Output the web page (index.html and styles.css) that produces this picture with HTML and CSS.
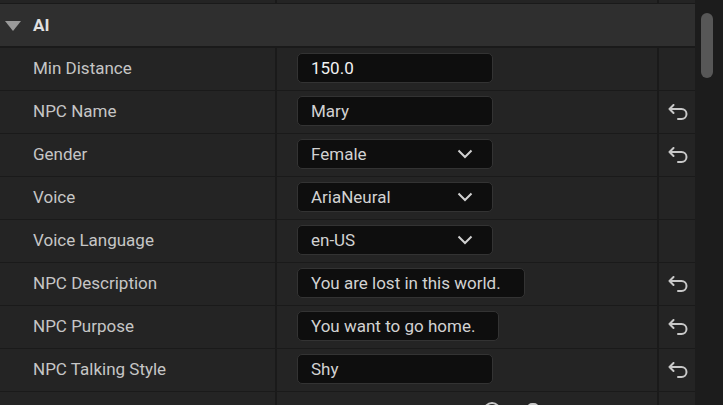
FILE: index.html
```html
<!DOCTYPE html>
<html>
<head>
<meta charset="utf-8">
<link rel="stylesheet" href="styles.css">
</head>
<body>
<div class="panel">
  <div class="list">
    <div class="row strip"><div class="cell"></div><div class="cell"></div><div class="cell"></div></div>
    <div class="header">
      <svg class="tri" width="16" height="10" viewBox="0 0 16 10"><path d="M0 0 H16 L8 10 Z" fill="#9a9a9a"/></svg>
      <span class="htitle">AI</span>
    </div>
    <div class="rows">
      <div class="row">
        <div class="cell name">Min Distance</div>
        <div class="cell val"><div class="box w196 bright">150.0</div></div>
        <div class="cell"></div>
      </div>
      <div class="row">
        <div class="cell name">NPC Name</div>
        <div class="cell val"><div class="box w196">Mary</div></div>
        <div class="cell reset"><svg width="20" height="17" viewBox="0 0 20 17"><path d="M1.5 5 H13.5 A5 5 0 0 1 13.5 15 H10 M5.5 1 L1.5 5 L5.5 9" fill="none" stroke="#c8c8c8" stroke-width="2" stroke-linecap="round" stroke-linejoin="round"/></svg></div>
      </div>
      <div class="row">
        <div class="cell name">Gender</div>
        <div class="cell val"><div class="box w196 select"><span>Female</span><svg width="16" height="10" viewBox="0 0 16 10"><path d="M1.5 1.5 L8 8 L14.5 1.5" fill="none" stroke="#d0d0d0" stroke-width="2"/></svg></div></div>
        <div class="cell reset"><svg width="20" height="17" viewBox="0 0 20 17"><path d="M1.5 5 H13.5 A5 5 0 0 1 13.5 15 H10 M5.5 1 L1.5 5 L5.5 9" fill="none" stroke="#c8c8c8" stroke-width="2" stroke-linecap="round" stroke-linejoin="round"/></svg></div>
      </div>
      <div class="row">
        <div class="cell name">Voice</div>
        <div class="cell val"><div class="box w196 select"><span>AriaNeural</span><svg width="16" height="10" viewBox="0 0 16 10"><path d="M1.5 1.5 L8 8 L14.5 1.5" fill="none" stroke="#d0d0d0" stroke-width="2"/></svg></div></div>
        <div class="cell"></div>
      </div>
      <div class="row">
        <div class="cell name">Voice Language</div>
        <div class="cell val"><div class="box w196 select"><span>en-US</span><svg width="16" height="10" viewBox="0 0 16 10"><path d="M1.5 1.5 L8 8 L14.5 1.5" fill="none" stroke="#d0d0d0" stroke-width="2"/></svg></div></div>
        <div class="cell"></div>
      </div>
      <div class="row">
        <div class="cell name">NPC Description</div>
        <div class="cell val"><div class="box w228">You are lost in this world.</div></div>
        <div class="cell reset"><svg width="20" height="17" viewBox="0 0 20 17"><path d="M1.5 5 H13.5 A5 5 0 0 1 13.5 15 H10 M5.5 1 L1.5 5 L5.5 9" fill="none" stroke="#c8c8c8" stroke-width="2" stroke-linecap="round" stroke-linejoin="round"/></svg></div>
      </div>
      <div class="row">
        <div class="cell name">NPC Purpose</div>
        <div class="cell val"><div class="box w202">You want to go home.</div></div>
        <div class="cell reset"><svg width="20" height="17" viewBox="0 0 20 17"><path d="M1.5 5 H13.5 A5 5 0 0 1 13.5 15 H10 M5.5 1 L1.5 5 L5.5 9" fill="none" stroke="#c8c8c8" stroke-width="2" stroke-linecap="round" stroke-linejoin="round"/></svg></div>
      </div>
      <div class="row">
        <div class="cell name">NPC Talking Style</div>
        <div class="cell val"><div class="box w196">Shy</div></div>
        <div class="cell reset"><svg width="20" height="17" viewBox="0 0 20 17"><path d="M1.5 5 H13.5 A5 5 0 0 1 13.5 15 H10 M5.5 1 L1.5 5 L5.5 9" fill="none" stroke="#c8c8c8" stroke-width="2" stroke-linecap="round" stroke-linejoin="round"/></svg></div>
      </div>
      <div class="row last">
        <div class="cell name top">Behavior Tree</div>
        <div class="cell val top">
          <span class="faint">Selected</span>
          <svg class="ico1" width="20" height="20" viewBox="0 0 20 20"><circle cx="10" cy="10" r="8" fill="none" stroke="#c8c8c8" stroke-width="2"/></svg>
          <svg class="ico2" width="16" height="20" viewBox="0 0 16 20"><rect x="2" y="2" width="12" height="16" rx="5" fill="#c8c8c8"/></svg>
        </div>
        <div class="cell"></div>
      </div>
    </div>
  </div>
  <div class="scrollbar"><div class="thumb"></div></div>
</div>
</body>
</html>
```

FILE: styles.css
```css
html, body {
  margin: 0;
  padding: 0;
  background: #1a1a1a;
  font-family: Roboto, "Liberation Sans", sans-serif;
  overflow: hidden;
}
.panel {
  display: flex;
  width: 723px;
  height: 405px;
  overflow: hidden;
}
.list {
  width: 695px;
  display: flex;
  flex-direction: column;
}
.row {
  display: grid;
  grid-template-columns: 275px 380px 36px;
  column-gap: 2px;
  height: 42px;
  margin-top: 1px;
  flex-shrink: 0;
}
.row.strip {
  height: 3px;
  margin-top: 0;
}
.cell {
  box-sizing: border-box;
  background: #242424;
  display: flex;
  align-items: center;
  padding-bottom: 2px;
}
.strip .cell {
  padding-bottom: 0;
}
.header {
  height: 42px;
  margin-top: 1px;
  background: #2f2f2f;
  display: flex;
  align-items: center;
  flex-shrink: 0;
}
.tri {
  margin-left: 5px;
  margin-top: 1px;
}
.htitle {
  margin-left: 12px;
  font-size: 17px;
  font-weight: bold;
  color: #e0e0e0;
}
.rows {
  margin-top: 1px;
  display: flex;
  flex-direction: column;
}
.name {
  padding-left: 33px;
  font-size: 17px;
  color: #c6c6c6;
}
.val {
  padding-left: 20px;
}
.box {
  box-sizing: border-box;
  height: 30px;
  background: #0e0e0e;
  border: 1px solid #333333;
  border-radius: 5px;
  padding-left: 13px;
  padding-bottom: 1px;
  display: flex;
  align-items: center;
  font-size: 17px;
  color: #d2d2d2;
}
.box.bright { color: #f2f2f2; }
.w196 { width: 196px; }
.w228 { width: 228px; }
.w202 { width: 202px; }
.select {
  justify-content: space-between;
  padding-right: 19px;
}
.reset {
  justify-content: center;
  padding-left: 2px;
  padding-bottom: 0;
}
.top {
  align-items: flex-start;
  padding-top: 9px;
}
.faint {
  font-size: 17px;
  color: #c6c6c6;
}
.ico1 {
  margin-left: 120px;
}
.ico2 {
  margin-left: 23px;
}
.scrollbar {
  width: 28px;
  background: #1c1c1c;
  position: relative;
}
.thumb {
  position: absolute;
  left: 6px;
  top: 13px;
  width: 12px;
  height: 65px;
  border-radius: 6px;
  background: #575757;
}
```
